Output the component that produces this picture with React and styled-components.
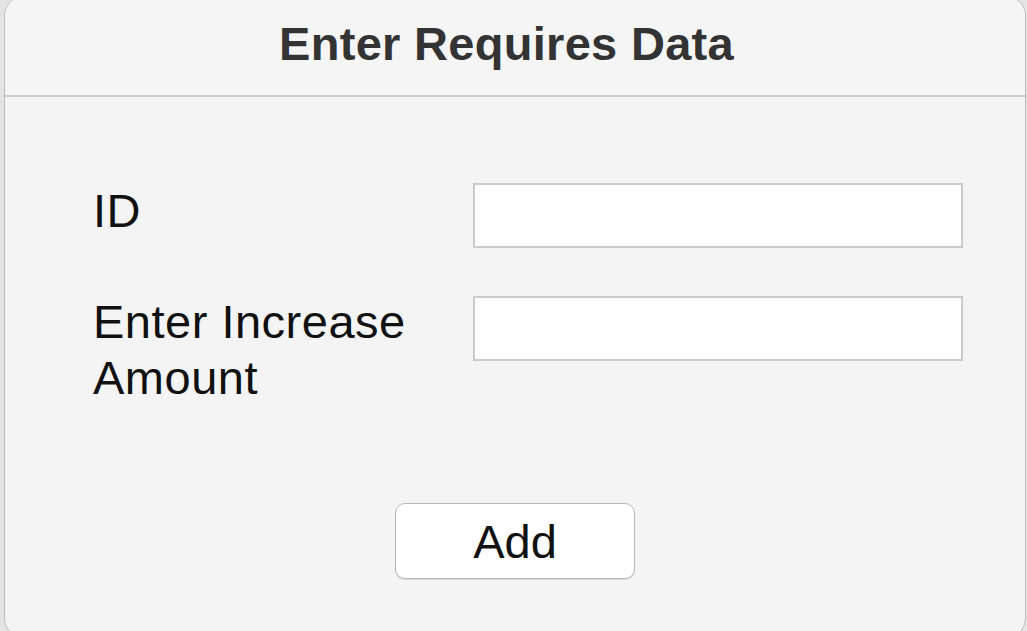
import React from 'react';
import styled, { createGlobalStyle } from 'styled-components';

const GlobalStyle = createGlobalStyle`
  html, body {
    margin: 0;
    padding: 0;
    height: 100%;
    overflow: hidden;
    background: #e4e4e4;
  }
  body {
    font-family: "Liberation Sans", Arial, sans-serif;
  }
`;

// окно диалога
const Window = styled.div`
  box-sizing: border-box;
  width: 1022px;
  height: 642px;
  margin: -4px 0 0 4px;
  border: 1px solid #bcbcbc;
  border-radius: 20px;
  background: #f4f4f4;
  overflow: hidden;
  display: flex;
  flex-direction: column;
`;

const TitleBar = styled.div`
  box-sizing: border-box;
  height: 100px;
  padding: 23px 17px 0 0;
  background: #f5f5f5;
  border-bottom: 2px solid #cdcdcd;
  text-align: center;
`;

const Title = styled.h1`
  margin: 0;
  font-size: 47px;
  line-height: 47px;
  font-weight: 700;
  letter-spacing: 0.3px;
  color: #333;
`;

const Body = styled.div`
  display: flex;
  flex-direction: column;
  align-items: center;
  padding-top: 86px;
`;

const Form = styled.div`
  align-self: stretch;
  display: grid;
  grid-template-columns: 380px 490px;
  row-gap: 48px;
  align-items: start;
  padding-left: 88px;
`;

const Label = styled.label`
  font-size: 47px;
  line-height: 56px;
  letter-spacing: 0.5px;
  color: #111;
  margin-top: ${(p) => p.$shift || 0}px;
`;

const Input = styled.input`
  box-sizing: border-box;
  width: 490px;
  height: 65px;
  border: 2px solid #cbcbcb;
  background: #fff;
  outline: none;
  font: inherit;
  font-size: 30px;
  padding: 0 10px;
`;

const Button = styled.button`
  box-sizing: border-box;
  margin-top: 97px;
  width: 240px;
  height: 76px;
  border: 1px solid #b8b8b8;
  border-radius: 10px;
  background: #fff;
  box-shadow: 0 1px 1px rgba(0, 0, 0, 0.12);
  font-family: "Liberation Sans", Arial, sans-serif;
  font-size: 47px;
  color: #111;
  padding: 0;
`;

const fields = [
  { id: 'id', label: 'ID', shift: 0 },
  { id: 'amount', label: 'Enter Increase Amount', shift: -2 },
];

const App = () => {
  return (
    <>
      <GlobalStyle />
      <Window>
        <TitleBar>
          <Title>Enter Requires Data</Title>
        </TitleBar>
        <Body>
          <Form>
            {fields.map((f) => (
              <React.Fragment key={f.id}>
                <Label htmlFor={f.id} $shift={f.shift}>{f.label}</Label>
                <Input id={f.id} type="text" />
              </React.Fragment>
            ))}
          </Form>
          <Button>Add</Button>
        </Body>
      </Window>
    </>
  );
};

export default App;
